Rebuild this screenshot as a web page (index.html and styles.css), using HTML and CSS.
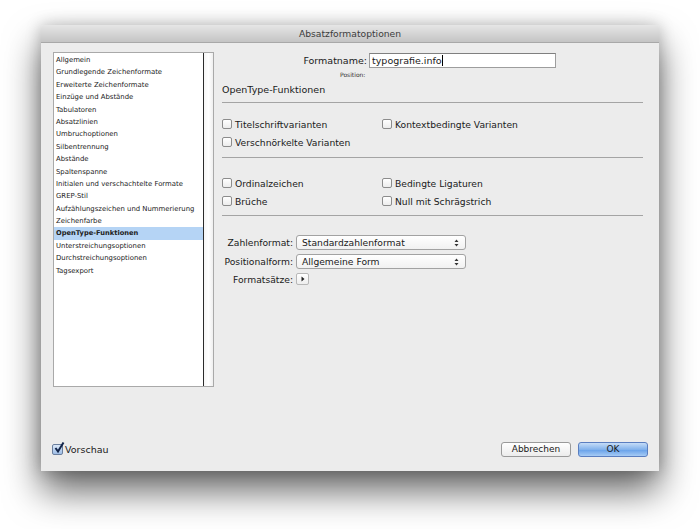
FILE: index.html
```html
<!DOCTYPE html>
<html>
  <head>
    <meta charset="utf-8" />
    <title>Absatzformatoptionen</title>
    <link rel="stylesheet" href="styles.css">
  </head>
  <body>
    <div class="window">
      <div class="titlebar">Absatzformatoptionen</div>
      <div class="content">
        <div class="listbox">
          <ul class="list">
            <li>Allgemein</li>
            <li>Grundlegende Zeichenformate</li>
            <li>Erweiterte Zeichenformate</li>
            <li>Einzüge und Abstände</li>
            <li>Tabulatoren</li>
            <li>Absatzlinien</li>
            <li>Umbruchoptionen</li>
            <li>Silbentrennung</li>
            <li>Abstände</li>
            <li>Spaltenspanne</li>
            <li>Initialen und verschachtelte Formate</li>
            <li>GREP-Stil</li>
            <li>Aufzählungszeichen und Nummerierung</li>
            <li>Zeichenfarbe</li>
            <li class="selected">OpenType-Funktionen</li>
            <li>Unterstreichungsoptionen</li>
            <li>Durchstreichungsoptionen</li>
            <li>Tagsexport</li>
          </ul>
          <div class="scrolltrack"></div>
        </div>

        <div class="pane">
          <div class="name-row">
            <span class="name-label">Formatname:</span>
            <div class="textfield">typografie.info<span class="caret"></span></div>
          </div>
          <div class="position">Position:</div>
          <div class="heading">OpenType-Funktionen</div>
          <div class="rule"></div>

          <div class="checks">
            <label class="check"><span class="box"></span>Titelschriftvarianten</label>
            <label class="check"><span class="box"></span>Kontextbedingte Varianten</label>
            <label class="check"><span class="box"></span>Verschnörkelte Varianten</label>
          </div>
          <div class="rule"></div>

          <div class="checks second">
            <label class="check"><span class="box"></span>Ordinalzeichen</label>
            <label class="check"><span class="box"></span>Bedingte Ligaturen</label>
            <label class="check"><span class="box"></span>Brüche</label>
            <label class="check"><span class="box"></span>Null mit Schrägstrich</label>
          </div>
          <div class="rule"></div>

          <div class="fields">
            <span class="field-label">Zahlenformat:</span>
            <div class="select">Standardzahlenformat
              <svg class="updown" width="5" height="8" viewBox="0 0 5 8"><path d="M2.5 0.5 L4.5 3 L0.5 3 Z M2.5 7.5 L4.5 5 L0.5 5 Z" fill="#333"/></svg>
            </div>
            <span class="field-label">Positionalform:</span>
            <div class="select">Allgemeine Form
              <svg class="updown" width="5" height="8" viewBox="0 0 5 8"><path d="M2.5 0.5 L4.5 3 L0.5 3 Z M2.5 7.5 L4.5 5 L0.5 5 Z" fill="#333"/></svg>
            </div>
            <span class="field-label">Formatsätze:</span>
            <div class="disclose">
              <svg width="4" height="6" viewBox="0 0 4 6"><path d="M0.5 0.5 L3.5 3 L0.5 5.5 Z" fill="#222"/></svg>
            </div>
          </div>
        </div>
      </div>

      <div class="footer">
        <label class="preview"><span class="box checked">
          <svg width="12" height="12" viewBox="0 0 12 12"><path d="M2.5 6 L5 9.5 L10.5 0.5" fill="none" stroke="#13254a" stroke-width="2"/></svg>
        </span>Vorschau</label>
        <div class="buttons">
          <div class="button">Abbrechen</div>
          <div class="button default">OK</div>
        </div>
      </div>
    </div>
  </body>
</html>
```

FILE: styles.css
```css
body {
  margin: 0;
  min-height: 529px;
  background: #ffffff;
  font-family: "DejaVu Sans", sans-serif;
  color: #1a1a1a;
}

.window {
  width: 618px;
  height: 446px;
  margin: 25px 0 0 41px;
  background: #ececec;
  box-shadow: 0 20px 36px rgba(0, 0, 0, 0.6), 0 0 16px rgba(0, 0, 0, 0.22);
  border-radius: 3px 3px 0 0;
  display: flex;
  flex-direction: column;
}

.titlebar {
  height: 17px;
  line-height: 17px;
  text-align: center;
  font-size: 9.2px;
  color: #3c3c3c;
  background: linear-gradient(#e6e6e6, #c4c4c4);
  border-bottom: 1px solid #a8a8a8;
  border-radius: 3px 3px 0 0;
}

.content {
  display: flex;
  padding: 9px 0 0 12px;
  height: 336px;
}

/* left list */
.listbox {
  width: 161px;
  height: 335px;
  display: flex;
  background: #ffffff;
  border: 1px solid #a9a9a9;
  box-sizing: border-box;
}
.list {
  list-style: none;
  margin: 0;
  padding: 1px 0 0 0;
  width: 149px;
  border-right: 1px solid #2b2b2b;
}
.list li {
  height: 12.4px;
  line-height: 12.4px;
  padding-left: 2px;
  font-size: 6.9px;
  color: #222;
  white-space: nowrap;
}
.list li.selected {
  background: #b5d4f5;
  font-weight: bold;
  font-size: 6.7px;
}
.scrolltrack {
  flex: 1;
  background: linear-gradient(90deg, #f6f6f6, #ffffff 50%, #efefef);
}

/* right pane */
.pane {
  margin-left: 8px;
  width: 421px;
  display: flex;
  flex-direction: column;
}
.name-row {
  display: flex;
  align-items: center;
  height: 16px;
}
.name-label {
  width: 145px;
  text-align: right;
  font-size: 9.5px;
  margin-right: 2px;
}
.textfield {
  width: 187px;
  height: 15px;
  line-height: 15px;
  background: #fff;
  border: 1px solid #9d9d9d;
  border-top-color: #7f7f7f;
  font-size: 9.5px;
  padding-left: 2px;
  box-sizing: border-box;
  display: flex;
  align-items: center;
}
.caret {
  display: inline-block;
  width: 1px;
  height: 11px;
  background: #000;
}
.position {
  font-size: 6px;
  margin: 2px 0 0 118px;
  height: 10px;
  line-height: 10px;
  color: #333;
}
.heading {
  font-size: 9.5px;
  margin-top: 4px;
  height: 12px;
  line-height: 12px;
}
.rule {
  height: 1px;
  background: #a4a4a4;
  margin-top: 6px;
}

.checks {
  display: grid;
  grid-template-columns: 160px 1fr;
  row-gap: 6px;
  padding-top: 15px;
  padding-bottom: 3px;
}
.checks.second {
  padding-top: 19px;
  padding-bottom: 2px;
}
.check {
  display: flex;
  align-items: center;
  height: 12px;
  font-size: 9.2px;
}
.box {
  width: 10px;
  height: 10px;
  box-sizing: border-box;
  border: 1px solid #8c8c8c;
  border-radius: 2px;
  background: linear-gradient(#ffffff, #ececec);
  margin-right: 3px;
  flex: none;
  position: relative;
}

.fields {
  display: grid;
  grid-template-columns: 71px auto;
  justify-content: start;
  align-items: center;
  column-gap: 3px;
  row-gap: 4px;
  padding-top: 19px;
}
.field-label {
  text-align: right;
  font-size: 9.2px;
  white-space: nowrap;
}
.select {
  width: 170px;
  height: 15px;
  box-sizing: border-box;
  border: 1px solid #a2a2a2;
  border-radius: 3px;
  background: linear-gradient(#ffffff, #f1f1f1);
  font-size: 9.2px;
  line-height: 13px;
  padding-left: 5px;
  display: flex;
  align-items: center;
  justify-content: space-between;
  padding-right: 6px;
}
.updown {
  flex: none;
}
.disclose {
  width: 13px;
  height: 12px;
  box-sizing: border-box;
  border: 1px solid #b8b8b8;
  border-radius: 2px;
  background: linear-gradient(#ffffff, #eeeeee);
  display: flex;
  align-items: center;
  justify-content: center;
}

/* footer */
.footer {
  flex: 1;
  display: flex;
  align-items: flex-end;
  justify-content: space-between;
  padding: 0 11px 14px 11px;
}
.preview {
  display: flex;
  align-items: center;
  font-size: 9.5px;
  margin-bottom: 2px;
}
.box.checked {
  width: 11px;
  height: 11px;
  margin-right: 2px;
  border-color: #6b7f9e;
  background: linear-gradient(#dbe8f8, #9ebde6);
}
.box.checked svg {
  position: absolute;
  left: 0;
  top: -3px;
}
.buttons {
  display: flex;
  gap: 7px;
}
.button {
  width: 70px;
  height: 15px;
  box-sizing: border-box;
  border: 1px solid #9a9a9a;
  border-radius: 3px;
  background: linear-gradient(#ffffff, #ececec);
  text-align: center;
  font-size: 9px;
  line-height: 13px;
}
.button.default {
  border-color: #5a7ec0;
  background: linear-gradient(#c5dcf7, #82b2ec 50%, #6aa3ea 55%, #a6cbf5);
}
```
